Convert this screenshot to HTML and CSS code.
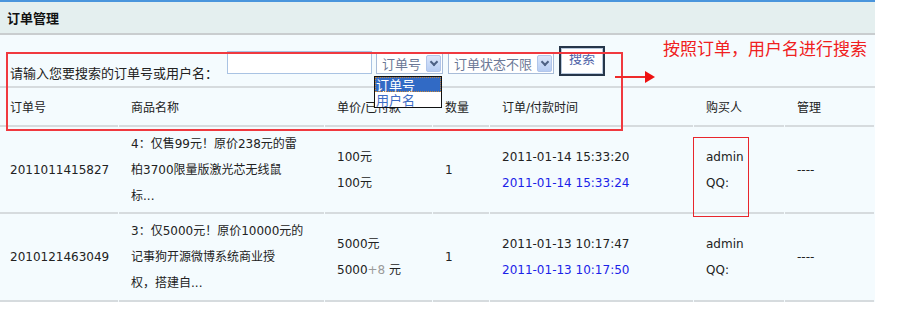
FILE: index.html
```html
<!DOCTYPE html>
<html lang="zh-CN">
<head>
    <meta charset="UTF-8">
    <title>订单管理</title>
    <link rel="stylesheet" href="styles.css">
</head>
<body>
<div class="panel">
    <div class="panel-title">订单管理</div>
    <table class="orders">
        <colgroup>
            <col style="width:119px">
            <col style="width:206px">
            <col style="width:108px">
            <col style="width:57px">
            <col style="width:204px">
            <col style="width:91px">
            <col style="width:90px">
        </colgroup>
        <tr class="search-row">
            <td colspan="7">
                <form class="search">
                    <label class="search-label">请输入您要搜索的订单号或用户名：</label>
                    <input type="text" class="search-input">
                    <span class="select sel-type">订单号<i class="sel-btn"></i></span>
                    <span class="select sel-status">订单状态不限<i class="sel-btn"></i></span>
                    <button type="button" class="search-btn">搜索</button>
                </form>
            </td>
        </tr>
        <tr class="head">
            <td>订单号</td>
            <td>商品名称</td>
            <td>单价/已付款</td>
            <td>数量</td>
            <td>订单/付款时间</td>
            <td>购买人</td>
            <td>管理</td>
        </tr>
        <tr class="row">
            <td>2011011415827</td>
            <td class="name">4：仅售99元！原价238元的雷<br>柏3700限量版激光芯无线鼠<br>标...</td>
            <td>100元<br>100元</td>
            <td>1</td>
            <td>2011-01-14 15:33:20<br><span class="paid">2011-01-14 15:33:24</span></td>
            <td>admin<br>QQ:</td>
            <td>----</td>
        </tr>
        <tr class="row row-2">
            <td>2010121463049</td>
            <td class="name">3：仅5000元！原价10000元的<br>记事狗开源微博系统商业授<br>权，搭建自...</td>
            <td>5000元<br>5000<span class="extra">+8</span> 元</td>
            <td>1</td>
            <td>2011-01-13 10:17:47<br><span class="paid">2011-01-13 10:17:50</span></td>
            <td>admin<br>QQ:</td>
            <td>----</td>
        </tr>
    </table>

    <!-- 下拉框展开状态 -->
    <ul class="dropdown">
        <li class="active">订单号</li>
        <li>用户名</li>
    </ul>

    <!-- 标注 -->
    <div class="mark mark-search"></div>
    <div class="mark mark-buyer"></div>
    <div class="mark-arrow"></div>
    <div class="mark-note">按照订单，用户名进行搜索</div>
</div>
</body>
</html>
```
FILE: styles.css
```css
body {
    margin: 0;
    background: #fff;
    font-family: "DejaVu Sans", "Noto Sans CJK SC", sans-serif;
    font-size: 12px;
    color: #222;
}
.panel {
    position: relative;
    width: 875px;
    background: #f4fbfe;
    border-top: 2px solid #4a95dc;
}
.panel-title {
    height: 31px;
    line-height: 31px;
    padding-left: 7px;
    background: #e4efef;
    border-bottom: 2px solid #c9cdcf;
    font-family: "Noto Sans CJK SC", sans-serif;
    font-weight: bold;
    font-size: 13px;
    color: #111;
}
.orders {
    width: 875px;
    table-layout: fixed;
    border-collapse: collapse;
}
.orders td {
    padding: 0 0 2px 12px;
    vertical-align: middle;
    white-space: nowrap;
    background-image: linear-gradient(#d6dbde, #d6dbde);
    background-size: calc(100% - 1px) 2px;
    background-position: left bottom;
    background-repeat: no-repeat;
}
.orders td:first-child {
    padding-left: 10px;
}
.search-row td {
    height: 51px;
    padding: 0 0 2px 8px;
    vertical-align: top;
    background-size: 100% 2px;
}
.search {
    display: flex;
    align-items: flex-start;
    padding-top: 11px;
}
.search-label {
    margin-top: 17px;
    font-family: "Noto Sans CJK SC", sans-serif;
    font-size: 13px;
    width: 217px;
}
.search-input {
    box-sizing: border-box;
    width: 145px;
    height: 23px;
    margin: 5px 0 0 0;
    border: 1px solid #a9c3e3;
    background: #fff;
}
.select {
    box-sizing: border-box;
    display: flex;
    align-items: center;
    justify-content: space-between;
    height: 21px;
    margin: 7px 0 0 4px;
    padding: 0 1px 0 5px;
    border: 1px solid #a8bcd8;
    background: #fff;
    color: #6b7896;
    font-size: 13px;
}
.sel-type {
    width: 67px;
}
.sel-status {
    width: 106px;
    margin-left: 5px;
}
.sel-btn {
    position: relative;
    width: 15px;
    height: 17px;
    border-radius: 2px;
    background: linear-gradient(#dbe6fb, #b7cdf3);
    border: 1px solid #b2c6ea;
    box-sizing: border-box;
}
.sel-btn::after {
    content: "";
    position: absolute;
    left: 4px;
    top: 3px;
    width: 4px;
    height: 4px;
    border-right: 2px solid #4d6185;
    border-bottom: 2px solid #4d6185;
    transform: rotate(45deg);
}
.search-btn {
    box-sizing: border-box;
    display: flex;
    justify-content: center;
    align-items: flex-start;
    width: 46px;
    height: 30px;
    margin-left: 5px;
    padding: 3px 0 0 0;
    border: 2px solid #26364a;
    background: #fff;
    box-shadow: inset 0 0 0 1px #b8c8dc;
    color: #5063a8;
    font-family: "Noto Sans CJK SC", sans-serif;
    font-size: 13px;
    line-height: 14px;
}
.head td {
    height: 37px;
    color: #222;
}
.row td {
    height: 85px;
    line-height: 26px;
}
.row-2 td {
    height: 86px;
}
.paid {
    color: #1a22e8;
}
.extra {
    color: #9a9a9a;
}
.dropdown {
    position: absolute;
    left: 374px;
    top: 74px;
    width: 66px;
    margin: 0;
    padding: 0;
    list-style: none;
    background: #fff;
    border: 1px solid #111;
    font-family: "Noto Sans CJK SC", sans-serif;
    font-size: 13px;
}
.dropdown li {
    height: 15px;
    line-height: 15px;
    padding-left: 1px;
    color: #3d6cc4;
}
.dropdown li.active {
    background: #316ac5;
    color: #fff;
    outline: 1px dotted #c4863a;
    outline-offset: -1px;
}
.mark {
    position: absolute;
    border: 2px solid #f0393f;
}
.mark-search {
    left: 6px;
    top: 50px;
    width: 613px;
    height: 75px;
}
.mark-buyer {
    left: 693px;
    top: 135px;
    width: 54px;
    height: 78px;
    border-width: 1px;
    border-color: #e8262c;
}
.mark-arrow {
    position: absolute;
    left: 615px;
    top: 74px;
    width: 30px;
    height: 2px;
    background: #ee2a2a;
}
.mark-arrow::after {
    content: "";
    position: absolute;
    left: 30px;
    top: -5px;
    border-left: 10px solid #ee1111;
    border-top: 6px solid transparent;
    border-bottom: 6px solid transparent;
}
.mark-note {
    position: absolute;
    left: 663px;
    top: 36px;
    font-family: "Noto Sans CJK SC", sans-serif;
    font-size: 17px;
    line-height: 20px;
    color: #f02020;
}
```
